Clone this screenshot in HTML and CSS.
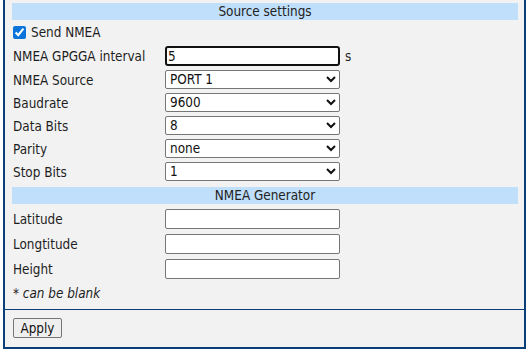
FILE: index.html
```html
<!DOCTYPE html>
<html>
<head>
<meta charset="utf-8">
<link rel="stylesheet" href="styles.css">
</head>
<body>
<div class="panel">
  <div class="content">
    <div class="section-title">Source settings</div>
    <label class="check-row"><input type="checkbox" class="check" checked><span>Send NMEA</span></label>
    <div class="form-row row-text">
      <span class="label">NMEA GPGGA interval</span>
      <input type="text" class="field field-focus" value="5"><span class="unit">s</span>
    </div>
    <div class="form-row row-select">
      <span class="label">NMEA Source</span>
      <select class="field-select"><option>PORT 1</option></select>
    </div>
    <div class="form-row row-select">
      <span class="label">Baudrate</span>
      <select class="field-select"><option>9600</option></select>
    </div>
    <div class="form-row row-select">
      <span class="label">Data Bits</span>
      <select class="field-select"><option>8</option></select>
    </div>
    <div class="form-row row-select">
      <span class="label">Parity</span>
      <select class="field-select"><option>none</option></select>
    </div>
    <div class="form-row row-select">
      <span class="label">Stop Bits</span>
      <select class="field-select"><option>1</option></select>
    </div>
    <div class="section-title section-gen">NMEA Generator</div>
    <div class="form-row row-gen first">
      <span class="label">Latitude</span>
      <input type="text" class="field">
    </div>
    <div class="form-row row-gen">
      <span class="label">Longtitude</span>
      <input type="text" class="field">
    </div>
    <div class="form-row row-gen">
      <span class="label">Height</span>
      <input type="text" class="field">
    </div>
    <div class="note">* <em>can be blank</em></div>
  </div>
  <div class="footer">
    <button class="btn">Apply</button>
  </div>
</div>
</body>
</html>
```
FILE: styles.css
```css
html, body {
  margin: 0;
  padding: 0;
  background: #ffffff;
}
body {
  padding: 0 2px 0 3px;
  font-family: "DejaVu Sans Condensed", "DejaVu Sans", sans-serif;
  font-size: 13.4px;
  color: #1e1e1e;
}
.panel {
  box-sizing: border-box;
  width: 523px;
  height: 349px;
  background: #f2f2f2;
  border: 2px solid #0b3f78;
  border-top: none;
  display: flex;
  flex-direction: column;
}
.content {
  padding: 3px 6px 0 7px;
  height: 310px;
  box-sizing: border-box;
  border-bottom: 1px solid #0b3f78;
}
.section-title {
  background: #c0dffa;
  height: 17px;
  line-height: 17px;
  text-align: center;
  color: #222;
}
.section-gen {
  margin-top: 4px;
}
.check-row {
  display: flex;
  align-items: center;
  height: 24px;
  padding-left: 1px;
  padding-top: 1px;
  box-sizing: border-box;
}
.check {
  width: 13px;
  height: 13px;
  margin: 0 5px 0 0;
  accent-color: #0b74da;
}
.form-row {
  display: flex;
  align-items: center;
  padding-left: 1px;
}
.row-text { height: 24px; }
.row-select { height: 23px; }
.row-gen { height: 25px; }
.row-gen.first { margin-top: 2px; }
.label {
  width: 152px;
  flex: none;
  padding-top: 1px;
}
.field {
  box-sizing: border-box;
  width: 175px;
  height: 20px;
  margin: 0;
  padding: 1px 2px;
  border: 1px solid #767676;
  border-radius: 2px;
  background: #fff;
  font-family: inherit;
  font-size: 13.4px;
  color: #111;
}
.field-focus {
  border: 2px solid #111;
  border-radius: 3px;
  padding: 0 1px;
}
.unit {
  margin-left: 5px;
}
.field-select {
  box-sizing: border-box;
  width: 175px;
  height: 19px;
  margin: 0;
  border: 1px solid #767676;
  border-radius: 2px;
  background: #fff;
  font-family: inherit;
  font-size: 13.4px;
  color: #111;
}
.note {
  height: 24px;
  line-height: 24px;
  padding-left: 1px;
  margin-top: 1px;
}
.footer {
  flex: 1;
  padding: 8px 0 0 8px;
}
.btn {
  box-sizing: border-box;
  width: 49px;
  height: 20px;
  margin: 0;
  padding: 0;
  font-family: inherit;
  font-size: 13.4px;
  color: #111;
  background: #efefef;
  border: 1px solid #767676;
  border-radius: 2px;
}
```
